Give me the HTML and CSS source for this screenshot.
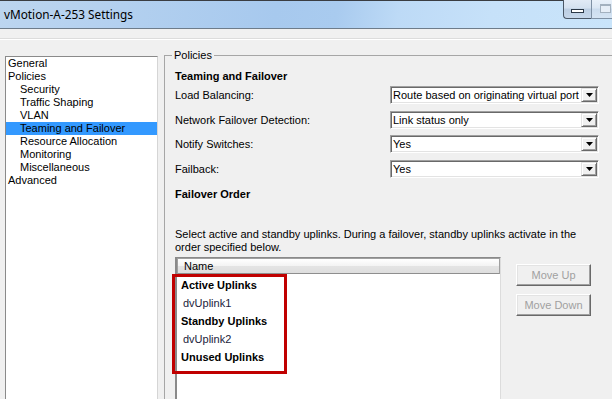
FILE: index.html
```html
<!DOCTYPE html>
<html lang="en">
<head>
<meta charset="utf-8">
<title>vMotion-A-253 Settings</title>
<link rel="stylesheet" href="styles.css">
</head>
<body>
<div class="window">
  <div class="titlebar">
    <span class="title">vMotion-A-253 Settings</span>
    <div class="caption">
      <div class="cbtn min"><span class="glyph"></span></div>
      <div class="cbtn max"><span class="glyph"></span></div>
    </div>
  </div>
  <div class="sep"></div>
  <div class="main">
    <ul class="tree">
      <li>General</li>
      <li>Policies</li>
      <li class="child">Security</li>
      <li class="child">Traffic Shaping</li>
      <li class="child">VLAN</li>
      <li class="child selected">Teaming and Failover</li>
      <li class="child">Resource Allocation</li>
      <li class="child">Monitoring</li>
      <li class="child">Miscellaneous</li>
      <li>Advanced</li>
    </ul>
    <fieldset class="policies">
      <legend>Policies</legend>
      <h3 class="sec-title">Teaming and Failover</h3>
      <div class="fields">
        <label>Load Balancing:</label>
        <div class="combo"><span class="val">Route based on originating virtual port</span><span class="arrow"><svg width="7" height="4" viewBox="0 0 7 4"><polygon points="0,0 7,0 3.5,4" fill="#000"/></svg></span></div>
        <label>Network Failover Detection:</label>
        <div class="combo"><span class="val">Link status only</span><span class="arrow"><svg width="7" height="4" viewBox="0 0 7 4"><polygon points="0,0 7,0 3.5,4" fill="#000"/></svg></span></div>
        <label>Notify Switches:</label>
        <div class="combo"><span class="val">Yes</span><span class="arrow"><svg width="7" height="4" viewBox="0 0 7 4"><polygon points="0,0 7,0 3.5,4" fill="#000"/></svg></span></div>
        <label>Failback:</label>
        <div class="combo"><span class="val">Yes</span><span class="arrow"><svg width="7" height="4" viewBox="0 0 7 4"><polygon points="0,0 7,0 3.5,4" fill="#000"/></svg></span></div>
      </div>
      <h3 class="sec-title order">Failover Order</h3>
      <p class="desc">Select active and standby uplinks. During a failover, standby uplinks activate in the<br>order specified below.</p>
      <div class="uplinks">
        <div class="list">
          <div class="list-head">Name</div>
          <ul class="items">
            <li class="group">Active Uplinks</li>
            <li class="item">dvUplink1</li>
            <li class="group">Standby Uplinks</li>
            <li class="item">dvUplink2</li>
            <li class="group">Unused Uplinks</li>
          </ul>
          <div class="highlight-box"></div>
        </div>
        <div class="buttons">
          <button class="btn up" disabled>Move Up</button>
          <button class="btn down" disabled>Move Down</button>
        </div>
      </div>
    </fieldset>
  </div>
</div>
</body>
</html>
```
FILE: styles.css
```css
* { box-sizing: border-box; }
html, body { margin: 0; padding: 0; }
body {
  width: 612px;
  height: 399px;
  overflow: hidden;
  background: #f0f0f0;
  font-family: "Liberation Sans", Arial, sans-serif;
  font-size: 11px;
  color: #000;
}
.window { width: 612px; height: 399px; overflow: hidden; }

.titlebar {
  height: 29px;
  border-top: 1px solid #3a3d42;
  border-bottom: 1px solid #6e7c8a;
  background: linear-gradient(100deg, #bcd5ef 0%, #b3d0ef 20%, #a7c9ee 45%, #a9cbef 55%, #bddaf6 65%, #c6e1f9 80%, #c9e4fa 100%);
  display: flex;
  justify-content: space-between;
  align-items: flex-start;
}
.title {
  font-family: "Noto Sans", "Open Sans", sans-serif;
  font-size: 11.8px;
  line-height: 26px;
  padding-left: 4px;
  color: #000;
}
.caption { display: flex; margin-top: -1px; flex: none; }
.cbtn {
  height: 19px;
  display: flex;
  align-items: center;
  justify-content: center;
}
.cbtn.min {
  width: 28px;
  border-left: 1px solid #4a5766;
  border-bottom: 1px solid #4a5766;
  border-bottom-left-radius: 4px;
  background: linear-gradient(#e1eaf5, #d4e1ef 45%, #bccee2 50%, #c6d7ea);
}
.cbtn.min .glyph {
  width: 13px;
  height: 4px;
  margin-top: 4px;
  border: 1px solid #2b3846;
  background: #fff;
}
.cbtn.max {
  width: 21px;
  border-left: 1px solid #7f91a5;
  border-bottom: 1px solid #7f91a5;
  background: linear-gradient(#e9f1fa, #dbe7f4 45%, #cbdcee 50%, #d5e4f3);
  justify-content: flex-start;
  padding-left: 8px;
}
.cbtn.max .glyph {
  width: 11px;
  height: 9px;
  margin-top: -1px;
  border: 1px solid #a3b1bf;
  border-top-width: 2px;
  background: #e6eef7;
}

.sep {
  height: 20px;
  background: linear-gradient(to bottom, transparent 9px, #dcdcdc 9px, #dcdcdc 10px, #ffffff 10px, #ffffff 11px, transparent 11px);
}

.main {
  display: flex;
  align-items: flex-start;
  padding-left: 5px;
}

.tree {
  flex: none;
  list-style: none;
  margin: 7px 6px 0 0;
  padding: 0;
  width: 153px;
  height: 400px;
  background: #fff;
  border: 1px solid;
  border-color: #8a8a8a #d5d5d5 #d5d5d5 #8a8a8a;
}
.tree li {
  height: 13px;
  line-height: 13px;
  padding-left: 2px;
  white-space: nowrap;
}
.tree li.child { padding-left: 14px; }
.tree li.selected { background: #3399ff; }

.policies {
  flex: none;
  margin: 0;
  padding: 8px 0 0 10px;
  border: 1px solid #a6a6a6;
  width: 470px;
  min-width: 0;
  height: 400px;
}
.policies legend {
  padding: 0 2px;
  margin-left: -3px;
  line-height: 13px;
}
.sec-title {
  margin: 0;
  font-size: 11px;
  font-weight: bold;
  line-height: 13px;
}
.fields {
  display: grid;
  grid-template-columns: 215px 209px;
  grid-auto-rows: 18px;
  row-gap: 6.5px;
  margin-top: 3px;
  align-items: center;
}
.fields label { white-space: nowrap; }
.combo {
  height: 18px;
  display: flex;
  align-items: center;
  background: #fff;
  border: 1px solid;
  border-color: #a0a0a0 #ffffff #ffffff #a0a0a0;
  box-shadow: inset 1px 1px #696969, inset -1px -1px #e3e3e3;
  padding-left: 2px;
}
.combo .val { flex: 1; white-space: nowrap; overflow: hidden; }
.combo .arrow {
  width: 16px;
  height: 14px;
  margin-right: 1px;
  flex: none;
  background: #f0f0f0;
  border: 1px solid;
  border-color: #e3e3e3 #696969 #696969 #e3e3e3;
  box-shadow: inset 1px 1px #fff, inset -1px -1px #a0a0a0;
  display: flex;
  align-items: center;
  justify-content: center;
}
.combo .arrow svg { display: block; }

.sec-title.order { margin-top: 10px; }
.desc {
  margin: 27px 0 0;
  line-height: 13px;
  white-space: nowrap;
}

.uplinks {
  display: flex;
  align-items: flex-start;
  margin-top: 3.5px;
}
.list {
  flex: none;
  position: relative;
  width: 326px;
  height: 200px;
  background: #fff;
  border-top: 1px solid #8a8a8a;
  border-left: 2px solid #8a8a8a;
  border-right: 1px solid #dcdcdc;
}
.list-head {
  height: 16px;
  line-height: 14px;
  padding-left: 6px;
  border: 1px solid #a0a0a0;
  border-bottom-color: #8e8e8e;
  background: linear-gradient(#ffffff, #f3f3f3 50%, #e4e4e4 51%, #dedede);
}
.items {
  list-style: none;
  margin: 2px 0 0;
  padding: 0;
}
.items li {
  height: 18px;
  line-height: 18px;
  white-space: nowrap;
}
.items li.group { font-weight: bold; padding-left: 4px; }
.items li.item { padding-left: 6px; color: #1c1c3c; }

.highlight-box {
  position: absolute;
  left: -5px;
  top: 16px;
  width: 115px;
  height: 100px;
  border: 3px solid #c00000;
}

.buttons {
  flex: none;
  display: flex;
  flex-direction: column;
  gap: 8px;
  margin: 7px 0 0 15px;
}
.btn {
  width: 75px;
  height: 22px;
  padding: 0;
  font: inherit;
  color: #a0a0a0;
  background: #f0f0f0;
  border: 1px solid;
  border-color: #ffffff #696969 #696969 #ffffff;
  box-shadow: inset -1px -1px #a0a0a0, inset 1px 1px #e3e3e3;
}
```
